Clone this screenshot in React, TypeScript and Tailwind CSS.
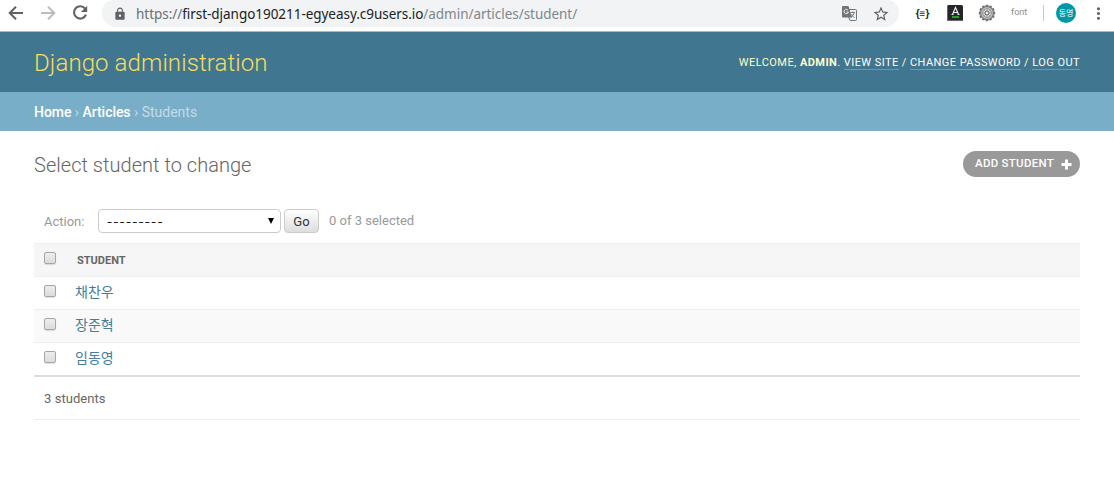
import React from "react";
import { MdLock, MdStarBorder, MdMoreVert } from "react-icons/md";

const students = ["채찬우", "장준혁", "임동영"];

function Checkbox() {
  return (
    <span className="block h-[12px] w-[12px] shrink-0 rounded-[2px] border border-[#a6a6a6] bg-linear-to-b from-[#ededed] to-[#dcdcdc] shadow-[0_1px_1px_rgba(0,0,0,0.12)]" />
  );
}

function Gear() {
  const teeth = Array.from({ length: 12 }, (_, i) => i * 30);
  return (
    <svg width="18" height="18" viewBox="0 0 18 18">
      {teeth.map((a) => (
        <rect key={a} x="7.6" y="0.8" width="2.8" height="3.4" rx="0.5" fill="#777" transform={`rotate(${a} 9 9)`} />
      ))}
      <circle cx="9" cy="9" r="6.4" fill="#c6c6c6" stroke="#6c6c6c" />
      <circle cx="9" cy="9" r="4.3" fill="#e4e4e4" stroke="#808080" strokeWidth="0.8" />
      <path d="M9 4.500v9M4.500 9h9M5.800 5.800l6.400 6.400M12.200 5.800l-6.400 6.400" stroke="#888" strokeWidth="0.7" />
      <circle cx="9" cy="9" r="2" fill="#eee" stroke="#555" strokeWidth="0.9" />
    </svg>
  );
}

function Arrow({ className }: { className: string }) {
  return (
    <svg className={className} width="20" height="20" viewBox="0 0 20 20" fill="none" stroke="currentColor" strokeWidth="2">
      <path d="M17 10H4.500M10 3.700L3.700 10L10 16.300" />
    </svg>
  );
}

function Reload() {
  return (
    <svg className="ml-[12px]" width="20" height="20" viewBox="0 0 20 20">
      <path d="M15.100 5.600A6.200 6.200 0 1 0 16 11.700" fill="none" stroke="currentColor" strokeWidth="2.1" />
      <path d="M17.200 2.700V9H10.900Z" fill="currentColor" />
    </svg>
  );
}

function Translate() {
  return (
    <svg className="shrink-0" width="15" height="15" viewBox="0 0 15 15">
      <path d="M6 3.500H13.500Q14.500 3.500 14.500 4.500V13.500Q14.500 14.500 13.500 14.500H8L6.500 11" fill="none" stroke="#70757a" />
      <path d="M8.500 6.500H13M10.800 5.500V6.500M12.300 6.700Q11.500 9.800 8.800 11.500M9.500 8Q10.500 10.200 12.500 11.800" fill="none" stroke="#70757a" strokeWidth="0.9" />
      <path d="M1 0H6.500L10 11.500H1Q0 11.500 0 10.500V1Q0 0 1 0Z" fill="#70757a" />
      <path d="M6 4.200A2.200 2.200 0 1 0 6.400 6H4.500" fill="none" stroke="#f1f3f4" strokeWidth="1" />
    </svg>
  );
}

function Toolbar() {
  return (
    <div className="flex h-8 items-start border-b border-[#b4b7b8] bg-white">
      <div className="flex h-[26px] w-[102px] shrink-0 items-center pl-[6px] text-[#5f6368]">
        <Arrow className="" />
        <Arrow className="ml-[12px] rotate-180 text-[#babcbe]" />
        <Reload />
      </div>
      <div className="flex h-[27px] w-[797px] shrink-0 items-center rounded-b-[14px] rounded-t-[12px] bg-[#f1f3f4] pl-[11px]">
        <MdLock size={14} className="text-[#5f6368]" />
        <div className="ml-[9px] w-[706px] whitespace-nowrap font-['Noto_Sans',sans-serif] text-[13.5px] leading-[26px] tracking-[-0.04px] text-[#80868b]">
          <span className="text-[#6b7075]">https://</span>
          <span className="text-[#202124]">first-django190211-egyeasy.c9users.io</span>
          /admin/articles/student/
        </div>
        <Translate />
        <MdStarBorder size={18} className="ml-[15px] shrink-0 text-[#5f6368]" />
      </div>
      <div className="flex h-[26px] flex-1 items-center">
        <span className="ml-[16px] w-[15px] text-center font-['Liberation_Sans',sans-serif] text-[10px] font-bold text-[#222]">{"{≡}"}</span>
        <svg className="ml-[17px] shrink-0" width="16" height="16" viewBox="0 0 16 16">
          <rect width="16" height="16" rx="1.5" fill="#25252c" />
          <path d="M0.500 1V14Q0.500 15.500 2 15.500H16" fill="none" stroke="#66666e" />
          <path d="M5.500 9.500L8.500 2.500L11.500 9.500M6.500 7.500H10.500M4.500 9.500H6.500M10.500 9.500H12.500" fill="none" stroke="#f2f2f2" strokeWidth="1.1" />
          <path d="M5 12H12" stroke="#27e31b" strokeWidth="1.3" />
        </svg>
        <span className="ml-[15px] shrink-0"><Gear /></span>
        <span className="ml-[15px] w-[18px] shrink-0 font-['Roboto',sans-serif] text-[9px] text-[#8e8e8e]">font</span>
        <span className="ml-[14px] h-4 w-px bg-[#c6c8ca]" />
        <span className="ml-[12px] flex h-5 w-5 shrink-0 items-center justify-center rounded-full bg-[#0097a7] font-['Noto_Sans_CJK_KR',sans-serif] text-[8px] leading-none text-white">동영</span>
        <MdMoreVert size={19} className="ml-[13px] shrink-0 text-[#5f6368]" />
      </div>
    </div>
  );
}

export default function App() {
  return (
    <div className="h-[482px] w-[1114px] overflow-hidden bg-white font-['Roboto','Noto_Sans_CJK_KR',sans-serif] text-[13px] text-[#333]">
      <Toolbar />
      <header className="flex h-[60px] items-center justify-between bg-[#417690] px-[34px] text-[#ffffcc]">
        <h1 className="pt-px text-[24px] font-light leading-[30px] tracking-[0.1px] text-[#f5dd5d]">Django administration</h1>
        <div className="whitespace-pre text-[11px] leading-[13px] tracking-[0.44px]">
          WELCOME, <b>ADMIN</b>.{" "}
          <a className="border-b border-white/25 text-white">VIEW SITE</a>
          {" / "}
          <a className="border-b border-white/25 text-white">CHANGE PASSWORD</a>
          {" / "}
          <a className="border-b border-white/25 text-white">LOG OUT</a>
        </div>
      </header>
      <nav className="h-[39px] whitespace-pre bg-[#79aec8] px-[34px] text-[14px] leading-[40px] text-[#c4dce8]">
        <a className="font-medium tracking-[-0.05px] text-white">Home</a> › <a className="font-medium tracking-[-0.05px] text-white">Articles</a> › Students
      </nav>
      <main className="px-[34px] pt-5">
        <div className="flex h-[26px] justify-between">
          <h2 className="text-[20px] font-light leading-[28px] tracking-[0.03px] text-[#666]">Select student to change</h2>
          <a className="flex h-[26px] w-[117px] items-center rounded-full bg-[#999] pl-[12px] text-[11.5px] font-medium tracking-[0.27px] text-white">
            <span className="w-[86px] whitespace-nowrap">ADD STUDENT</span>
            <svg className="shrink-0" width="11" height="11" viewBox="0 0 11 11">
              <path d="M5.500 0.500V10.500M0.500 5.500H10.500" stroke="white" strokeWidth="3" />
            </svg>
          </a>
        </div>
        <div className="mt-[32px] flex h-6 items-center pl-[10px] text-[#999]">
          <span className="w-[54px] pt-[2px]">Action:</span>
          <div className="flex h-6 w-[183px] items-center justify-between rounded-[4px] border border-[#ccc] bg-white pl-[8px] pr-[6px] text-black">
            <span className="font-['Noto_Sans',sans-serif] text-[16px] font-light leading-[20px] tracking-[1.15px]">---------</span>
            <svg width="6" height="6" viewBox="0 0 6 6"><path d="M0 0H6L3 6Z" fill="#000" /></svg>
          </div>
          <button className="ml-[3px] h-6 w-[35px] rounded-[4px] border border-[#ccc] bg-linear-to-b from-white to-[#ddd] pt-px text-[13px] leading-[22px] text-[#333]">Go</button>
          <span className="ml-[10px] leading-[24px]">0 of 3 selected</span>
        </div>
        <div className="mt-[10px] flex h-[34px] border-y border-[#eee] bg-[#f6f6f6] pl-[10px]">
          <span className="mt-[8px]"><Checkbox /></span>
          <span className="ml-[21px] text-[11px] font-bold leading-[33px] text-[#666]">STUDENT</span>
        </div>
        {students.map((name, i) => (
          <div key={name} className={`flex h-[33px] border-b pl-[10px] ${i === 1 ? "bg-[#f9f9f9]" : "bg-white"} ${i === 2 ? "border-[#ddd]" : "border-[#eee]"}`}>
            <span className="mt-[8px]"><Checkbox /></span>
            <a className="ml-[19px] text-[14px] leading-[31px] text-[#447e9b]">{name}</a>
          </div>
        ))}
        <div className="h-[44px] border-b border-t border-b-[#eee] border-t-[#ddd] pl-[10px] leading-[43px] tracking-[0.06px] text-[#666]">3 students</div>
      </main>
    </div>
  );
}
